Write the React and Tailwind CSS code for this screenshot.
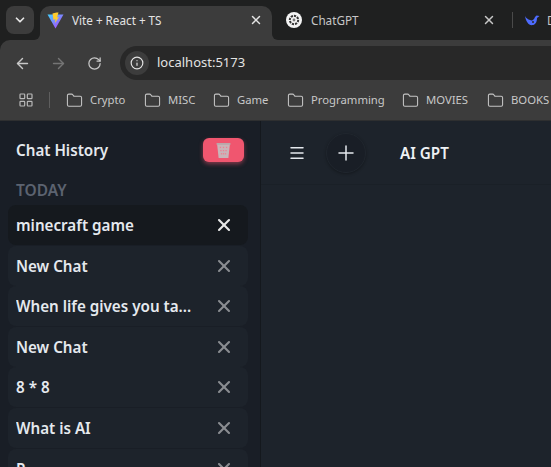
import React from "react";
import { ArrowLeft, ArrowRight, RotateCw, Info, ChevronDown, X, Folder, LayoutGrid, Menu, Plus } from "lucide-react";

const bookmarks = [
  ["Crypto", "w-[78px]"],
  ["MISC", "w-[69px]"],
  ["Game", "w-[74px]"],
  ["Programming", "w-[115px]"],
  ["MOVIES", "w-[85px]"],
  ["BOOKS", "w-[80px]"],
];
const chats = ["New Chat", "When life gives you ta...", "New Chat", "8 * 8", "What is AI", "P..."];

function ViteLogo() {
  return (
    <svg width="17" height="17" viewBox="0 0 17 17" className="shrink-0">
      <defs>
        <linearGradient id="v1" x1="0" y1="0" x2="1" y2="1">
          <stop offset="0" stopColor="#41d1ff" />
          <stop offset="1" stopColor="#bd34fe" />
        </linearGradient>
      </defs>
      <path d="M0.5 2.5 L16.5 2.5 L8.5 16.5 Z" fill="url(#v1)" />
      <path d="M9.5 0.5 L5.5 1.5 L6.5 8 L8.5 7 L8 11 L12 5 L10 5.5 L11.5 0.5 Z" fill="#ffcb2b" />
    </svg>
  );
}

function GptLogo() {
  return (
    <svg width="16" height="16" viewBox="0 0 16 16" className="shrink-0">
      <circle cx="8" cy="8" r="8" fill="#f4f4f4" />
      <circle cx="8" cy="8" r="4.2" fill="none" stroke="#333" strokeWidth="2" strokeDasharray="2.2 1" />
      <circle cx="8" cy="8" r="1.4" fill="#777" />
    </svg>
  );
}

function Whale() {
  return (
    <svg width="16" height="14" viewBox="0 0 16 14" className="shrink-0">
      <path d="M1 3 C2 9 5 13 9 12 C12 11.500 13 8 13 5 L15.500 3 L12.500 2.500 L11 4 C10 7 8 8 6 7 C4 6.500 2 5 1 3 Z" fill="#4d6bfe" />
      <circle cx="9" cy="9" r="1" fill="#2a2a2a" />
    </svg>
  );
}

function TrashIcon() {
  return (
    <svg width="17" height="17" viewBox="0 0 16 16">
      <path d="M2 2 H14 L12.600 15 H3.400 Z" fill="#c9b4b8" />
      <rect x="1.500" y="1" width="13" height="1.600" fill="#b5adaf" />
      <g fill="#ee7f92">
        <rect x="4.500" y="4.500" width="1.200" height="1.200" />
        <rect x="7.400" y="4.500" width="1.200" height="1.200" />
        <rect x="10.300" y="4.500" width="1.200" height="1.200" />
        <rect x="5" y="7.500" width="1.200" height="1.200" />
        <rect x="7.400" y="7.500" width="1.200" height="1.200" />
        <rect x="9.800" y="7.500" width="1.200" height="1.200" />
        <rect x="5.500" y="10.500" width="1.200" height="1.200" />
        <rect x="7.400" y="10.500" width="1.200" height="1.200" />
        <rect x="9.300" y="10.500" width="1.200" height="1.200" />
      </g>
    </svg>
  );
}

function ChatRow({ title, active }) {
  return (
    <div className={`h-[40px] shrink-0 mb-[0.600px] flex items-center justify-between pl-[8px] pr-[14px] rounded-lg ${active ? "bg-[#15191e]" : "bg-[#1d232b]"}`}>
      <span className="pt-[1px] text-[15.200px] font-semibold text-[#e5e9ee] truncate">{title}</span>
      <X size={20} strokeWidth={2.5} className={active ? "text-[#e8e8e8] shrink-0" : "text-[#8a8d91] shrink-0"} />
    </div>
  );
}

export default function App() {
  return (
    <div className="w-[551px] h-[467px] overflow-hidden flex flex-col bg-[#1f2020] font-['Noto_Sans',sans-serif]">
      <div className="h-[40px] shrink-0 flex items-start pt-[6px] pl-[6px] text-[11.700px] whitespace-nowrap">
        <div className="w-[28px] h-[28px] shrink-0 rounded-lg bg-[#3c3c3c] flex items-center justify-center text-[#e6e6e6]">
          <ChevronDown size={14} strokeWidth={3} />
        </div>
        <div className="relative ml-[6px] w-[232px] h-[34px] pb-[6px] bg-[#3c3c3c] rounded-t-[10px] flex items-center pl-[7px] pr-[9px] text-[#e3e3e3] shrink-0">
          <ViteLogo />
          <span className="ml-[8px] pt-[1px] flex-1">Vite + React + TS</span>
          <X size={14} strokeWidth={2.5} />
          <div className="absolute -right-[6px] bottom-0 w-[6px] h-[6px] bg-[#3c3c3c]">
            <div className="w-full h-full bg-[#1f2020] rounded-bl-[6px]" />
          </div>
          <div className="absolute -left-[6px] bottom-0 w-[6px] h-[6px] bg-[#3c3c3c]">
            <div className="w-full h-full bg-[#1f2020] rounded-br-[6px]" />
          </div>
        </div>
        <div className="w-[238px] h-[28px] flex items-center pl-[14px] pr-[14px] text-[#c7c7c7] shrink-0">
          <GptLogo />
          <span className="ml-[9px] pt-[1px] flex-1">ChatGPT</span>
          <X size={14} strokeWidth={2.5} />
        </div>
        <div className="h-[28px] flex items-center shrink-0 text-[#c7c7c7]">
          <div className="ml-[2px] w-px h-[16px] bg-[#4a4a4a]" />
          <div className="ml-[11px]"><Whale /></div>
          <span className="ml-[7px] pt-[1px]">DeepSeek</span>
        </div>
      </div>

      <div className="h-[40px] shrink-0 bg-[#3c3c3c] flex pt-[6px] rounded-tl-[10px]">
        <div className="w-[120px] shrink-0 flex items-center pl-[14px]">
          <ArrowLeft size={17} strokeWidth={2} className="text-[#c8c8c8]" />
          <ArrowRight size={17} strokeWidth={2} className="text-[#757575] ml-[19px]" />
          <RotateCw size={15} strokeWidth={2} className="text-[#c8c8c8] ml-[20px]" />
        </div>
        <div className="flex-1 h-[34px] bg-[#282828] rounded-l-full flex items-center pl-[5px]">
          <div className="w-[24px] h-[24px] rounded-full bg-[#3c3c3c] flex items-center justify-center text-[#e3e3e3]">
            <Info size={14} strokeWidth={2} />
          </div>
          <span className="ml-[8px] text-[13px] text-[#e3e3e3]">localhost:5173</span>
        </div>
      </div>

      <div className="h-[40px] shrink-0 bg-[#3c3c3c] flex items-center pl-[18px] text-[11.300px] text-[#c8c8c8] whitespace-nowrap">
        <LayoutGrid size={16} strokeWidth={1.800} className="text-[#b8b8b8] shrink-0" />
        <div className="ml-[15px] mr-[16px] w-px h-[16px] bg-[#5e5e5e] shrink-0" />
        {bookmarks.map(([b, w]) => (
          <div key={b} className={`${w} shrink-0 flex items-center gap-[7px]`}>
            <Folder size={17} strokeWidth={1.500} className="text-[#c4c4c4] shrink-0" />
            <span>{b}</span>
          </div>
        ))}
      </div>

      <div className="flex-1 flex min-h-0 border-t border-[#2e2f30]">
        <aside className="w-[261px] shrink-0 bg-[#191e26] pl-[8px] pr-[12px] flex flex-col border-r border-[#14181d]">
          <div className="h-[58px] shrink-0 flex items-center justify-between pl-[8px] pr-[4px]">
            <h1 className="pt-[1px] text-[15.200px] font-semibold text-[#e5e9ee]">Chat History</h1>
            <button className="w-[41px] h-[24px] rounded-md bg-[#f0566f] flex items-center justify-center shadow-[0_2px_4px_rgba(240,86,111,0.500)]">
              <TrashIcon />
            </button>
          </div>
          <div className="h-[22px] mb-[4px] pt-[1px] shrink-0 flex items-center pl-[8px] text-[15.500px] font-semibold text-[#5c6370]">TODAY</div>
          <div className="flex flex-col">
            <ChatRow title="minecraft game" active />
            {chats.map((c, i) => <ChatRow key={i} title={c} />)}
          </div>
        </aside>
        <main className="flex-1 bg-[#1d232b] min-w-0">
          <div className="h-[64px] flex items-center pl-[27px] border-b border-[#1a2027]">
            <Menu size={18} strokeWidth={2} className="text-[#e5e9ee]" />
            <div className="ml-[20px] w-[40px] h-[40px] rounded-full bg-[#191e26] border border-[#20262e] flex items-center justify-center shadow-[0_1px_3px_rgba(0,0,0,0.300)]">
              <Plus size={24} strokeWidth={1.500} className="text-[#e5e9ee]" />
            </div>
            <span className="ml-[34px] pt-[2px] text-[15.200px] font-semibold text-[#eef1f4]">AI GPT</span>
          </div>
        </main>
      </div>
    </div>
  );
}
